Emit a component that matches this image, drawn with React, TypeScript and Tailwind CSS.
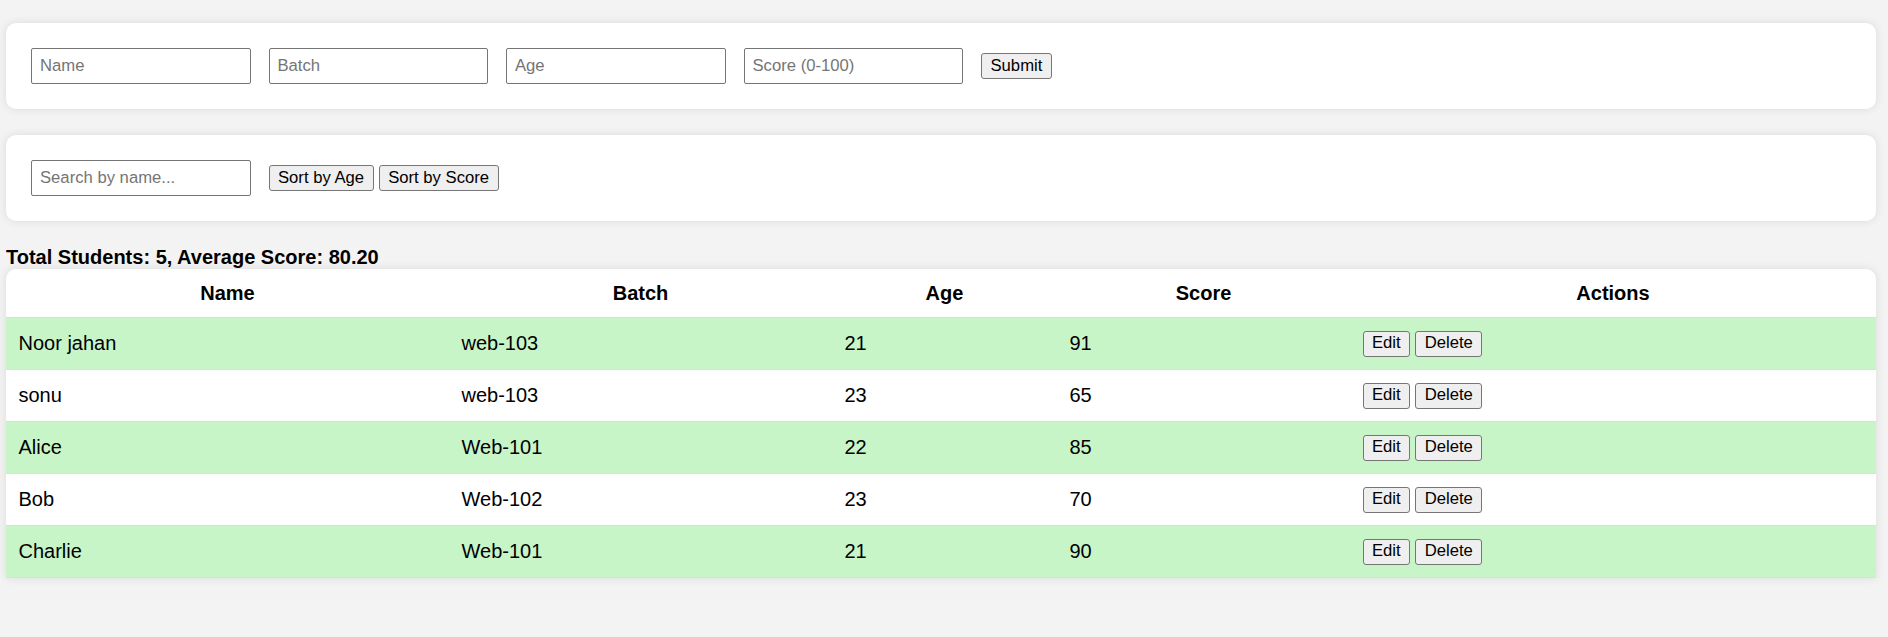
import { useState } from "react";

interface Student {
  name: string;
  batch: string;
  age: number;
  score: number;
}

const initialStudents: Student[] = [
  { name: "Noor jahan", batch: "web-103", age: 21, score: 91 },
  { name: "sonu", batch: "web-103", age: 23, score: 65 },
  { name: "Alice", batch: "Web-101", age: 22, score: 85 },
  { name: "Bob", batch: "Web-102", age: 23, score: 70 },
  { name: "Charlie", batch: "Web-101", age: 21, score: 90 },
];

const inputClass =
  "w-[219.5px] h-[36px] border border-[#767676] rounded-[2px] px-[8px] text-[16.67px] bg-white text-black placeholder:text-[#757575] outline-none";
const btnClass =
  "h-[26px] px-[8.5px] border border-[#767676] bg-[#efefef] rounded-[3px] text-[16.67px] leading-none text-black";

export default function App() {
  const [students] = useState<Student[]>(initialStudents);
  const [search, setSearch] = useState("");

  const avg =
    students.reduce((sum, s) => sum + s.score, 0) / (students.length || 1);

  return (
    <div
      className="min-h-[637px] bg-[#f3f3f3] pt-[23px] pl-[6px] text-black"
      style={{ fontFamily: '"Liberation Sans", Arial, sans-serif' }}
    >
      <div className="w-[1870px]">
        <form
          className="flex items-center gap-[18px] bg-white rounded-[10px] p-[25px] shadow-[0_0_10px_rgba(0,0,0,0.1)]"
          onSubmit={(e) => e.preventDefault()}
        >
          <input className={inputClass} placeholder="Name" />
          <input className={inputClass} placeholder="Batch" />
          <input className={inputClass} placeholder="Age" />
          <input className={inputClass} placeholder="Score (0-100)" />
          <button type="submit" className={btnClass}>
            Submit
          </button>
        </form>

        <div className="mt-[26px] flex items-center bg-white rounded-[10px] p-[25px] h-[86px] shadow-[0_0_10px_rgba(0,0,0,0.1)]">
          <input
            className={inputClass + " h-[35px]"}
            placeholder="Search by name..."
            value={search}
            onChange={(e) => setSearch(e.target.value)}
          />
          <button className={btnClass + " ml-[18px]"}>Sort by Age</button>
          <button className={btnClass + " ml-[5px]"}>Sort by Score</button>
        </div>

        <h4 className="mt-[25px] text-[20px] leading-[23px] font-bold">
          Total Students: {students.length}, Average Score: {avg.toFixed(2)}
        </h4>

        <div className="bg-white rounded-t-[10px] shadow-[0_0_10px_rgba(0,0,0,0.1)]">
          <table className="w-full table-fixed border-collapse text-[20px] leading-[23px]">
            <colgroup>
              <col className="w-[443px]" />
              <col className="w-[383px]" />
              <col className="w-[225px]" />
              <col className="w-[293px]" />
              <col />
            </colgroup>
            <thead>
              <tr className="border-b border-[#dddddd]">
                <th className="px-[12.5px] py-[12.5px] text-center font-bold">Name</th>
                <th className="px-[12.5px] py-[12.5px] text-center font-bold">Batch</th>
                <th className="px-[12.5px] py-[12.5px] text-center font-bold">Age</th>
                <th className="px-[12.5px] py-[12.5px] text-center font-bold">Score</th>
                <th className="px-[12.5px] py-[12.5px] text-center font-bold">Actions</th>
              </tr>
            </thead>
            <tbody>
              {students
                .filter((s) =>
                  s.name.toLowerCase().includes(search.toLowerCase())
                )
                .map((s, i) => (
                  <tr
                    key={s.name}
                    className={
                      i % 2 === 0
                        ? "bg-[#c8f5c8] border-b border-[#dddddd]"
                        : "bg-white border-b border-[#dddddd]"
                    }
                  >
                    <td className="px-[12.5px] py-[12.5px] h-[52px]">{s.name}</td>
                    <td className="px-[12.5px] py-[12.5px]">{s.batch}</td>
                    <td className="px-[12.5px] py-[12.5px]">{s.age}</td>
                    <td className="px-[12.5px] py-[12.5px]">{s.score}</td>
                    <td className="px-[12.5px] py-[12.5px]">
                      <div className="flex items-center gap-[5px]">
                        <button className={btnClass}>Edit</button>
                        <button className={btnClass}>Delete</button>
                      </div>
                    </td>
                  </tr>
                ))}
            </tbody>
          </table>
        </div>
      </div>
    </div>
  );
}
